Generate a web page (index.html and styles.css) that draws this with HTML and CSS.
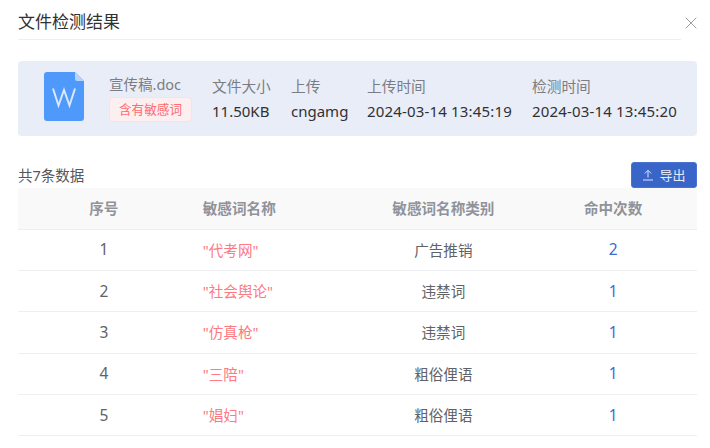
FILE: index.html
```html
<!DOCTYPE html>
<html lang="zh-CN">
<head>
<meta charset="utf-8">
<title>文件检测结果</title>
<link rel="stylesheet" href="styles.css">
</head>
<body>
<div class="dialog">
  <header class="head">
    <h1 class="title">文件检测结果</h1>
    <svg class="close" width="12" height="12" viewBox="0 0 12 12"><path d="M.7.7l10.600 10.600M11.300.7.7 11.300" fill="none" stroke="#9a9da3" stroke-width="1"/></svg>
  </header>
  <section class="card">
    <svg class="doc" width="40" height="49" viewBox="0 0 40 49">
      <path d="M3 0h28l9 9v37a3 3 0 0 1-3 3H3a3 3 0 0 1-3-3V3a3 3 0 0 1 3-3z" fill="#4f99fb"/>
      <path d="M31 0l9 9h-7a2 2 0 0 1-2-2z" fill="#b5d3fc"/>
      <path d="M9 16.500l5.500 17L20 18l5.500 15.500L31 16.500" fill="none" stroke="#d8e8fe" stroke-width="2"/>
    </svg>
    <div class="file">
      <div class="file-name">宣传稿.doc</div>
      <span class="tag">含有敏感词</span>
    </div>
    <div class="meta m-size"><div class="label">文件大小</div><div class="value">11.50KB</div></div>
    <div class="meta m-user"><div class="label">上传</div><div class="value">cngamg</div></div>
    <div class="meta m-up"><div class="label">上传时间</div><div class="value date">2024-03-14 13:45:19</div></div>
    <div class="meta"><div class="label">检测时间</div><div class="value date">2024-03-14 13:45:20</div></div>
  </section>
  <div class="bar">
    <span class="count">共7条数据</span>
    <button class="export" type="button">
      <svg width="12" height="12" viewBox="0 0 12 12"><path d="M1 11h10M6 8.500V1.500M2.800 4.500 6 1.300l3.200 3.200" fill="none" stroke="#dfe6f7" stroke-width="1"/></svg>
      <span>导出</span>
    </button>
  </div>
  <div class="table">
    <div class="row th"><div class="c">序号</div><div class="l">敏感词名称</div><div class="c">敏感词名称类别</div><div class="c">命中次数</div></div>
    <div class="row"><div class="c num">1</div><div class="l word">"代考网"</div><div class="c">广告推销</div><div class="c num hit">2</div></div>
    <div class="row"><div class="c num">2</div><div class="l word">"社会舆论"</div><div class="c">违禁词</div><div class="c num hit">1</div></div>
    <div class="row"><div class="c num">3</div><div class="l word">"仿真枪"</div><div class="c">违禁词</div><div class="c num hit">1</div></div>
    <div class="row"><div class="c num">4</div><div class="l word">"三陪"</div><div class="c">粗俗俚语</div><div class="c num hit">1</div></div>
    <div class="row"><div class="c num">5</div><div class="l word">"娼妇"</div><div class="c">粗俗俚语</div><div class="c num hit">1</div></div>
  </div>
</div>
</body>
</html>
```
FILE: styles.css
```css
* { box-sizing: border-box; }
html, body { margin: 0; height: 448px; overflow: hidden; background: #fff; }
body { font-family: "Noto Sans", "Noto Sans CJK SC", sans-serif; color: #606266; }
.dialog { padding: 0 13px 0 18px; }
.head { height: 40px; position: relative; border-bottom: 1px solid #eeeff2; margin-right: 16px; }
.title { margin: 0; font-size: 17px; font-weight: 400; line-height: 44px; color: #303133; height: 39px; }
.close { position: absolute; left: 667px; top: 17px; }
.card { margin-top: 21px; height: 75px; background: #e9edf8; border-radius: 4px; display: flex; align-items: center; padding-left: 26px; }
.doc { flex: none; margin-right: 25px; margin-top: -4px; }
.file { width: 103px; flex: none; margin-top: -2px; }
.file-name { font-size: 14.500px; line-height: 20px; color: #7b7d82; white-space: nowrap; }
.tag { display: inline-block; margin-top: 3px; width: 83px; height: 25px; line-height: 23px; text-align: center; font-size: 12.600px; color: #ff6b72; background: #fdeeef; border: 1px solid #fbdfe1; border-radius: 4px; white-space: nowrap; }
.meta { flex: none; margin-top: -1px; }
.m-size { width: 79px; }
.m-user { width: 76px; }
.m-up { width: 165px; }
.label { font-size: 14.700px; line-height: 24px; color: #7b7d82; white-space: nowrap; }
.value { font-size: 15px; line-height: 24px; color: #303133; white-space: nowrap; margin-top: 1px; }
.date { letter-spacing: .17px; }
.bar { margin-top: 25px; height: 27px; display: flex; justify-content: space-between; align-items: center; }
.count { font-size: 14.500px; line-height: 26px; color: #55585e; }
.export { width: 66px; height: 26px; margin: 0; padding: 0; border: 1px solid #4a72d3; border-radius: 3px; background: #3964c8; color: #e6ebf8; font: inherit; font-size: 13px; display: flex; align-items: center; justify-content: center; gap: 5px; }
.table { font-size: 14.600px; }
.row { display: grid; grid-template-columns: repeat(4, 1fr); height: 41.400px; align-items: center; border-bottom: 1px solid #eeeff3; padding-bottom: 1px; }
.th { height: 41.500px; background: #f9f9fa; font-weight: 700; color: #909399; }
.c { text-align: center; padding-left: 2px; }
.l { padding-left: 15px; }
.num { font-size: 15.500px; }
.word { color: #fd7a82; }
.hit { color: #4169d1; }
```
